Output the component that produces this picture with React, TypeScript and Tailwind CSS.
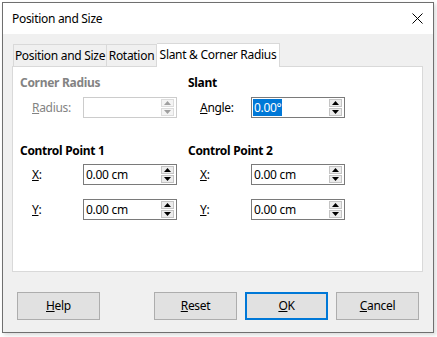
import React from 'react';

const font = { fontFamily: '"Noto Sans", "Liberation Sans", sans-serif' };

// Small up/down spin control drawn at the right edge of a field
const Spin: React.FC<{ disabled?: boolean }> = ({ disabled }) => {
  const fill = disabled ? '#a0a0a0' : '#000000';
  const box = disabled
    ? 'border-[#dcdcdc] bg-[#f4f4f4]'
    : 'border-[#c4c4c4] bg-[#ececec]';
  return (
    <div className="flex flex-col gap-[1px] mr-[2px]">
      <div className={`w-[13px] h-[8px] border ${box} flex items-center justify-center`}>
        <svg width="7" height="4" viewBox="0 0 7 4">
          <path d="M3.5 0 L7 4 L0 4 Z" fill={fill} />
        </svg>
      </div>
      <div className={`w-[13px] h-[8px] border ${box} flex items-center justify-center`}>
        <svg width="7" height="4" viewBox="0 0 7 4">
          <path d="M0 0 L7 0 L3.5 4 Z" fill={fill} />
        </svg>
      </div>
    </div>
  );
};

const Field: React.FC<{ value?: string; disabled?: boolean; selected?: boolean }> = ({
  value,
  disabled,
  selected,
}) => (
  <div
    className={`w-[94px] h-[21px] border bg-white flex items-center ${
      disabled ? 'border-[#cccccc]' : 'border-[#7a7a7a]'
    }`}
  >
    <div className="flex-1 pl-[1px] text-[12px] leading-[16px] text-black">
      {selected ? (
        <span className="bg-[#0078d7] text-white px-[1px]">{value}</span>
      ) : (
        <span className="pl-[1px]">{value}</span>
      )}
    </div>
    <Spin disabled={disabled} />
  </div>
);

const Row: React.FC<{ label: React.ReactNode; disabled?: boolean; children: React.ReactNode }> = ({
  label,
  disabled,
  children,
}) => (
  <div className="flex items-center">
    <div
      className={`w-[63px] pl-[12px] text-[12px] leading-[16px] ${
        disabled ? 'text-[#838383]' : 'text-black'
      }`}
    >
      {label}
    </div>
    {children}
  </div>
);

const Btn: React.FC<{ children: React.ReactNode; primary?: boolean }> = ({ children, primary }) => (
  <div
    className={`w-[83px] h-[28px] bg-[#e1e1e1] flex items-center justify-center text-[12px] text-black ${
      primary ? 'border-2 border-[#0078d7]' : 'border border-[#adadad]'
    }`}
  >
    {children}
  </div>
);

export default function App() {
  return (
    <div
      className="w-[437px] h-[337px] bg-white pt-[2px] pl-[2px] whitespace-nowrap tracking-[-0.3px]"
      style={font}
    >
      <div className="w-[432px] h-[331px] border border-[#6f6f6f] flex flex-col bg-[#f0f0f0] shadow-[2px_2px_4px_rgba(0,0,0,0.15)]">
        {/* title bar */}
        <div className="h-[31px] bg-white flex items-center justify-between pl-[9px] pr-[10px]">
          <span className="text-[12px] leading-[16px] text-black">Position and Size</span>
          <svg width="11" height="11" viewBox="0 0 11 11">
            <path d="M0.5 0.5 L10.5 10.5 M10.5 0.5 L0.5 10.5" stroke="#000" strokeWidth="1" />
          </svg>
        </div>

        {/* tabs */}
        <div className="flex items-end pl-[10px] mt-[8px] h-[24px] relative z-10">
          <div className="w-[94px] h-[22px] border border-b-0 border-[#d9d9d9] bg-[#f0f0f0] flex items-center justify-center text-[12px] text-black pt-[1px]">
            Position and Size
          </div>
          <div className="w-[50px] h-[22px] border border-l-0 border-b-0 border-[#d9d9d9] bg-[#f0f0f0] flex items-center justify-center text-[12px] text-black pt-[1px]">
            Rotation
          </div>
          <div className="w-[123px] h-[24px] -mb-px border border-l-0 border-b-0 border-[#d9d9d9] bg-white flex items-center justify-center text-[12px] text-black pb-[2px]">
            Slant &amp; Corner Radius
          </div>
        </div>

        {/* panel */}
        <div className="ml-[9px] w-[411px] h-[206px] border border-[#d9d9d9] bg-white pl-[7px]">
          <div className="grid grid-cols-[168px_1fr] mt-[8px]">
            <div className="text-[12px] leading-[16px] font-bold text-[#838383]">Corner Radius</div>
            <div className="text-[12px] leading-[16px] font-bold text-black">Slant</div>

            <div className="mt-[6px]">
              <Row disabled label={<><span className="underline">R</span>adius:</>}>
                <Field disabled />
              </Row>
            </div>
            <div className="mt-[6px]">
              <Row label={<><span className="underline">A</span>ngle:</>}>
                <Field value="0.00°" selected />
              </Row>
            </div>

            <div className="mt-[25px] text-[12px] leading-[16px] font-bold text-black">Control Point 1</div>
            <div className="mt-[25px] text-[12px] leading-[16px] font-bold text-black">Control Point 2</div>

            <div className="mt-[5px]">
              <Row label={<><span className="underline">X</span>:</>}>
                <Field value="0.00 cm" />
              </Row>
            </div>
            <div className="mt-[5px]">
              <Row label={<><span className="underline">X</span>:</>}>
                <Field value="0.00 cm" />
              </Row>
            </div>

            <div className="mt-[14px]">
              <Row label={<><span className="underline">Y</span>:</>}>
                <Field value="0.00 cm" />
              </Row>
            </div>
            <div className="mt-[14px]">
              <Row label={<><span className="underline">Y</span>:</>}>
                <Field value="0.00 cm" />
              </Row>
            </div>
          </div>
        </div>

        {/* buttons */}
        <div className="flex items-center mt-[20px] pl-[14px]">
          <Btn>
            <span className="underline">H</span>elp
          </Btn>
          <div className="ml-[54px] flex gap-[8px]">
            <Btn>
              <span className="underline">R</span>eset
            </Btn>
            <Btn primary>
              <span className="underline">O</span>K
            </Btn>
            <Btn>
              <span className="underline">C</span>ancel
            </Btn>
          </div>
        </div>
      </div>
    </div>
  );
}
